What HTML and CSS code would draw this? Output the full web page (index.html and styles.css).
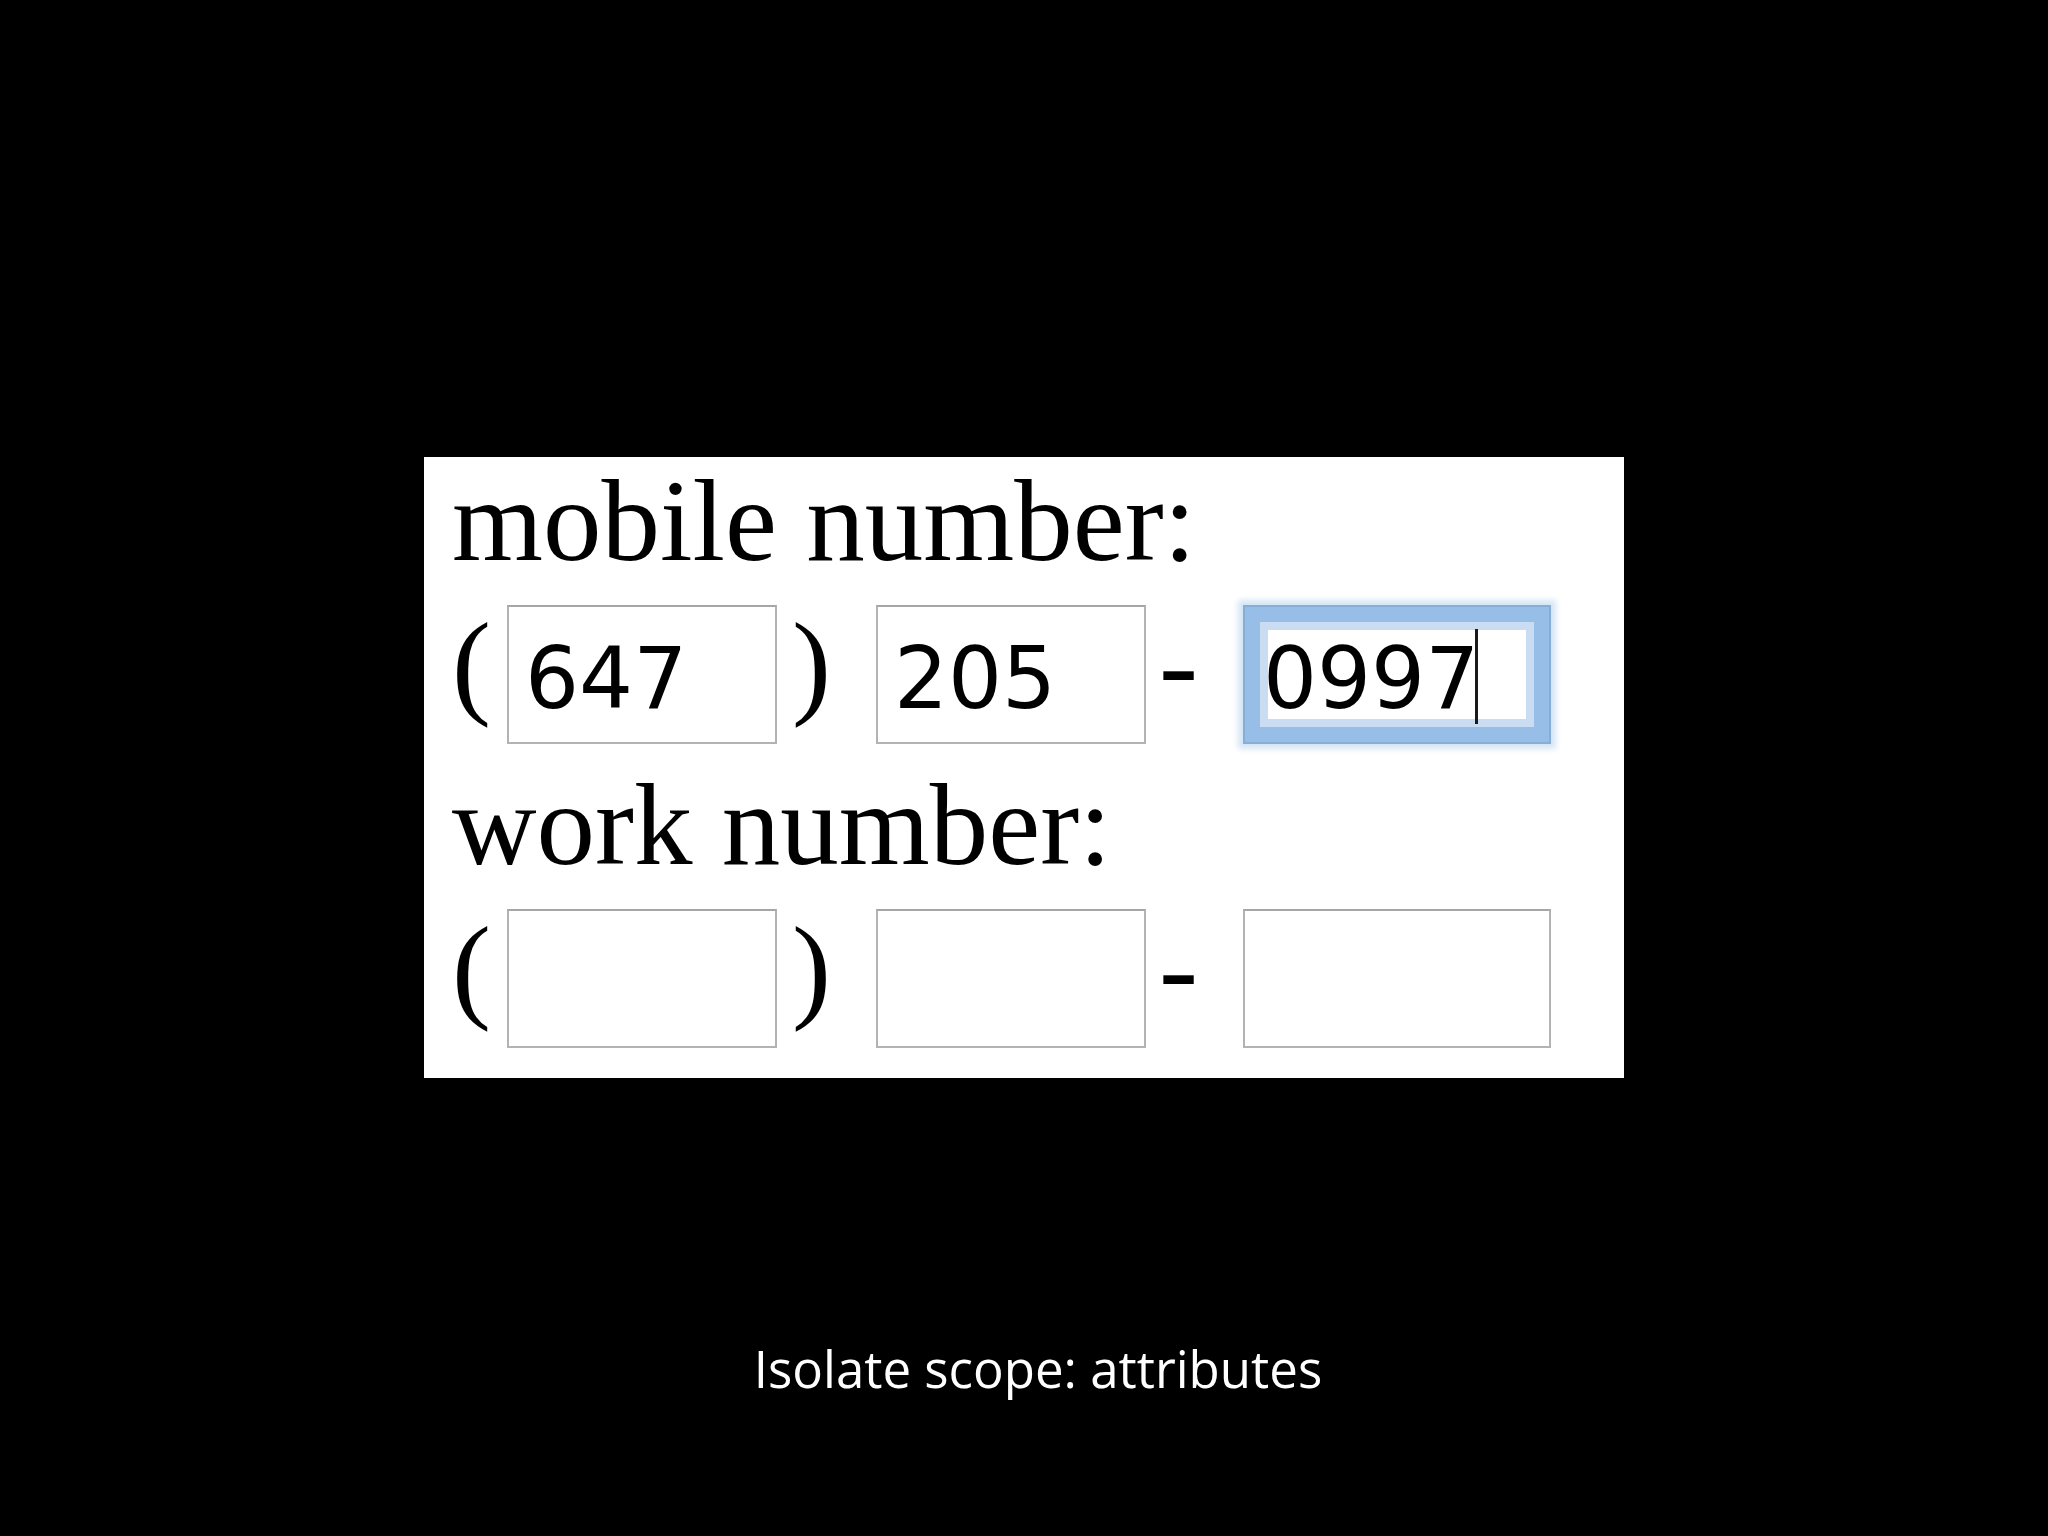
FILE: index.html
```html
<!DOCTYPE html>
<html lang="en">
<head>
<meta charset="utf-8">
<title>Isolate scope: attributes</title>
<link rel="stylesheet" href="styles.css">
</head>
<body>
<main class="stage">
  <section class="panel">
    <div class="label">mobile number:</div>
    <div class="phone-row">
      <span class="sym paren-open">(</span>
      <input class="field field-short" type="text" value="647">
      <span class="sym paren-close">)</span>
      <input class="field field-short" type="text" value="205">
      <span class="sym dash">-</span>
      <span class="focus-wrap">
        <input class="field field-long is-focused" type="text" value="0997">
        <span class="caret"></span>
      </span>
    </div>
    <div class="label">work number:</div>
    <div class="phone-row">
      <span class="sym paren-open">(</span>
      <input class="field field-short" type="text" value="">
      <span class="sym paren-close">)</span>
      <input class="field field-short" type="text" value="">
      <span class="sym dash">-</span>
      <input class="field field-long" type="text" value="">
    </div>
  </section>
  <p class="caption">Isolate scope: attributes</p>
</main>
</body>
</html>
```
FILE: styles.css
```css
* {
  box-sizing: border-box;
}

html, body {
  margin: 0;
  padding: 0;
  background: #000;
}

body {
  width: 2048px;
  height: 1536px;
  overflow: hidden;
}

.stage {
  display: flex;
  flex-direction: column;
  align-items: center;
  padding-top: 457px;
}

.panel {
  width: 1200px;
  height: 621px;
  background: #fff;
  padding: 5px 0 0 28px;
  font-family: "Liberation Serif", "Times New Roman", serif;
  font-size: 117px;
  line-height: 117px;
  color: #000;
}

.label {
  height: 117px;
  margin-bottom: 26px;
  white-space: nowrap;
}

.phone-row {
  display: flex;
  align-items: flex-start;
  height: 139px;
  margin-bottom: 22px;
}

.sym {
  display: block;
  line-height: 117px;
}

.paren-open {
  margin-right: 16px;
}

.paren-close {
  margin-left: 15px;
  margin-right: 45px;
}

.dash {
  margin-left: 13px;
  margin-right: 45px;
}

.field {
  display: block;
  height: 139px;
  margin: 0;
  padding: 8px 16px 0 16px;
  border: 2px solid #b3b3b3;
  border-top-color: #a6a6a6;
  border-radius: 0;
  background: #fff;
  font-family: "DejaVu Sans", "Verdana", sans-serif;
  font-size: 85px;
  color: #000;
  outline: none;
  caret-color: transparent;
}

.field-short {
  width: 270px;
}

.field-long {
  width: 308px;
}

.focus-wrap {
  position: relative;
  display: block;
}

.is-focused {
  padding-left: 18px;
  border-color: #86aed6;
  box-shadow:
    inset 0 0 0 15px #96bee6,
    inset 0 0 0 23px #c9dcf1,
    0 0 6px 5px #d5e5f5;
}

.caret {
  position: absolute;
  left: 232px;
  top: 24px;
  width: 3px;
  height: 95px;
  background: #1a1a1a;
}

.caption {
  margin: 265px 0 0 0;
  padding-left: 28px;
  font-family: "Open Sans", "Noto Sans", sans-serif;
  font-size: 51px;
  line-height: 51px;
  color: #fff;
  text-align: center;
  white-space: nowrap;
}
```
